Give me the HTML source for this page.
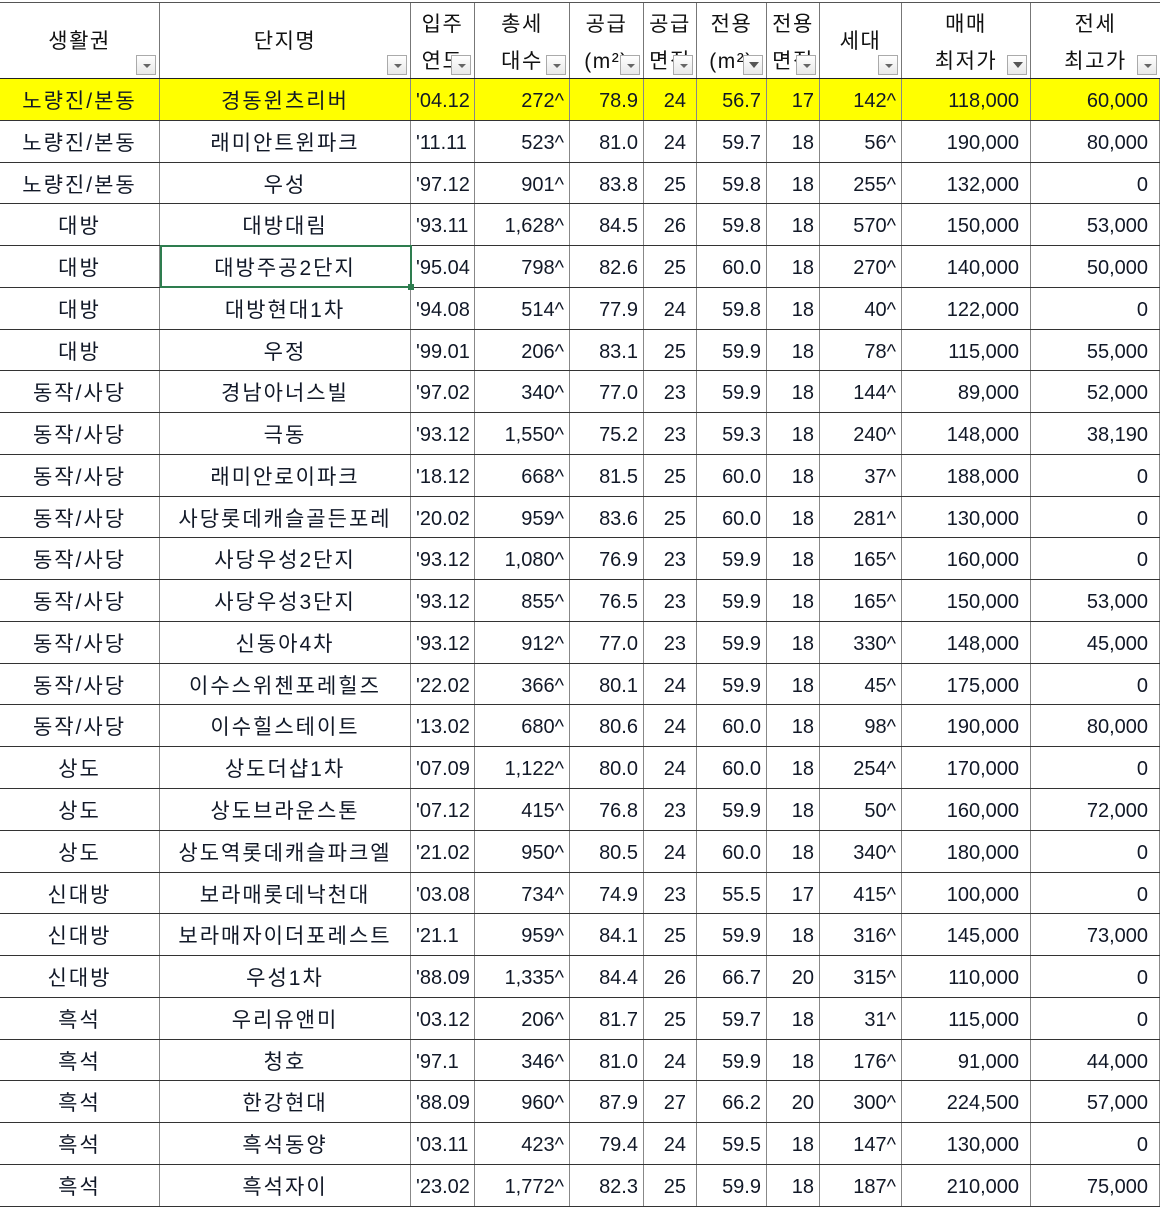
<!DOCTYPE html>
<html><head><meta charset="utf-8"><style>
*{margin:0;padding:0;box-sizing:border-box}
body{width:1160px;height:1207px;background:#fff;overflow:hidden;position:relative;font-family:"Liberation Sans","Noto Sans CJK KR",sans-serif;color:#111;}
.hdr{position:absolute;top:2px;left:0;height:77px;width:1160px;display:flex;border-top:1px solid #555;border-bottom:1px solid #222;}
.hdr>div{position:relative;border-right:1px solid #777;height:100%;font-size:21px;text-align:center;overflow:hidden;letter-spacing:1.5px}
.one{line-height:78px}
.two{line-height:37px;padding-top:3px}
.btn{position:absolute;right:3px;bottom:3px;width:20px;height:20px;border:1px solid #aaa;background:linear-gradient(#fff,#e8e8e8)}
.btn:after{content:"";position:absolute;left:6px;top:8px;border-left:4px solid transparent;border-right:4px solid transparent;border-top:4px solid #666}
.btn.f:after{left:5px;top:6px;border-left:5px solid transparent;border-right:5px solid transparent;border-top:6px solid #555}
.rows{position:absolute;top:79px;left:0;width:1160px}
.r{display:flex;height:41.78px;border-bottom:1px solid #333}
.r>div{border-right:1px solid #888;font-size:20px;line-height:41px;padding-top:2px;white-space:nowrap;overflow:hidden;color:#111827}
.r>div:nth-child(1),.r>div:nth-child(2){text-align:center;letter-spacing:2px;font-size:21px}
.r>div:nth-child(3){text-align:left;padding-left:5px}
.r>div:nth-child(n+4){text-align:right;padding-right:5px}
.r>div:nth-child(6){padding-right:10px}
.r>div:nth-child(10),.r>div:nth-child(11){padding-right:11px}
.y{background:#ffff00}
.c1{width:160px}.c2{width:251px}.c3{width:64px}.c4{width:95px}.c5{width:74px}.c6{width:53px}.c7{width:70px}.c8{width:53px}.c9{width:82px}.c10{width:129px}.c11{width:129px}
.sel{position:absolute;left:160px;top:245px;width:252px;height:43px;border:2px solid #2e7d4f}
.sel:after{content:"";position:absolute;right:-4px;bottom:-4px;width:6px;height:6px;background:#2e7d4f}
</style></head><body>
<div class="hdr">
<div class="c1 one">생활권<span class="btn"></span></div>
<div class="c2 one">단지명<span class="btn"></span></div>
<div class="c3 two">입주<br>연도<span class="btn"></span></div>
<div class="c4 two">총세<br>대수<span class="btn"></span></div>
<div class="c5 two">공급<br>(m²)<span class="btn"></span></div>
<div class="c6 two">공급<br>면적<span class="btn"></span></div>
<div class="c7 two">전용<br>(m²)<span class="btn f"></span></div>
<div class="c8 two">전용<br>면적<span class="btn"></span></div>
<div class="c9 one">세대<span class="btn"></span></div>
<div class="c10 two">매매<br>최저가<span class="btn f"></span></div>
<div class="c11 two" style="border-right:none">전세<br>최고가<span class="btn"></span></div>
</div>
<div class="rows">
<div class="r y"><div class="c1">노량진/본동</div><div class="c2">경동윈츠리버</div><div class="c3">'04.12</div><div class="c4">272^</div><div class="c5">78.9</div><div class="c6">24</div><div class="c7">56.7</div><div class="c8">17</div><div class="c9">142^</div><div class="c10">118,000</div><div class="c11">60,000</div></div>
<div class="r"><div class="c1">노량진/본동</div><div class="c2">래미안트윈파크</div><div class="c3">'11.11</div><div class="c4">523^</div><div class="c5">81.0</div><div class="c6">24</div><div class="c7">59.7</div><div class="c8">18</div><div class="c9">56^</div><div class="c10">190,000</div><div class="c11">80,000</div></div>
<div class="r"><div class="c1">노량진/본동</div><div class="c2">우성</div><div class="c3">'97.12</div><div class="c4">901^</div><div class="c5">83.8</div><div class="c6">25</div><div class="c7">59.8</div><div class="c8">18</div><div class="c9">255^</div><div class="c10">132,000</div><div class="c11">0</div></div>
<div class="r"><div class="c1">대방</div><div class="c2">대방대림</div><div class="c3">'93.11</div><div class="c4">1,628^</div><div class="c5">84.5</div><div class="c6">26</div><div class="c7">59.8</div><div class="c8">18</div><div class="c9">570^</div><div class="c10">150,000</div><div class="c11">53,000</div></div>
<div class="r"><div class="c1">대방</div><div class="c2">대방주공2단지</div><div class="c3">'95.04</div><div class="c4">798^</div><div class="c5">82.6</div><div class="c6">25</div><div class="c7">60.0</div><div class="c8">18</div><div class="c9">270^</div><div class="c10">140,000</div><div class="c11">50,000</div></div>
<div class="r"><div class="c1">대방</div><div class="c2">대방현대1차</div><div class="c3">'94.08</div><div class="c4">514^</div><div class="c5">77.9</div><div class="c6">24</div><div class="c7">59.8</div><div class="c8">18</div><div class="c9">40^</div><div class="c10">122,000</div><div class="c11">0</div></div>
<div class="r"><div class="c1">대방</div><div class="c2">우정</div><div class="c3">'99.01</div><div class="c4">206^</div><div class="c5">83.1</div><div class="c6">25</div><div class="c7">59.9</div><div class="c8">18</div><div class="c9">78^</div><div class="c10">115,000</div><div class="c11">55,000</div></div>
<div class="r"><div class="c1">동작/사당</div><div class="c2">경남아너스빌</div><div class="c3">'97.02</div><div class="c4">340^</div><div class="c5">77.0</div><div class="c6">23</div><div class="c7">59.9</div><div class="c8">18</div><div class="c9">144^</div><div class="c10">89,000</div><div class="c11">52,000</div></div>
<div class="r"><div class="c1">동작/사당</div><div class="c2">극동</div><div class="c3">'93.12</div><div class="c4">1,550^</div><div class="c5">75.2</div><div class="c6">23</div><div class="c7">59.3</div><div class="c8">18</div><div class="c9">240^</div><div class="c10">148,000</div><div class="c11">38,190</div></div>
<div class="r"><div class="c1">동작/사당</div><div class="c2">래미안로이파크</div><div class="c3">'18.12</div><div class="c4">668^</div><div class="c5">81.5</div><div class="c6">25</div><div class="c7">60.0</div><div class="c8">18</div><div class="c9">37^</div><div class="c10">188,000</div><div class="c11">0</div></div>
<div class="r"><div class="c1">동작/사당</div><div class="c2">사당롯데캐슬골든포레</div><div class="c3">'20.02</div><div class="c4">959^</div><div class="c5">83.6</div><div class="c6">25</div><div class="c7">60.0</div><div class="c8">18</div><div class="c9">281^</div><div class="c10">130,000</div><div class="c11">0</div></div>
<div class="r"><div class="c1">동작/사당</div><div class="c2">사당우성2단지</div><div class="c3">'93.12</div><div class="c4">1,080^</div><div class="c5">76.9</div><div class="c6">23</div><div class="c7">59.9</div><div class="c8">18</div><div class="c9">165^</div><div class="c10">160,000</div><div class="c11">0</div></div>
<div class="r"><div class="c1">동작/사당</div><div class="c2">사당우성3단지</div><div class="c3">'93.12</div><div class="c4">855^</div><div class="c5">76.5</div><div class="c6">23</div><div class="c7">59.9</div><div class="c8">18</div><div class="c9">165^</div><div class="c10">150,000</div><div class="c11">53,000</div></div>
<div class="r"><div class="c1">동작/사당</div><div class="c2">신동아4차</div><div class="c3">'93.12</div><div class="c4">912^</div><div class="c5">77.0</div><div class="c6">23</div><div class="c7">59.9</div><div class="c8">18</div><div class="c9">330^</div><div class="c10">148,000</div><div class="c11">45,000</div></div>
<div class="r"><div class="c1">동작/사당</div><div class="c2">이수스위첸포레힐즈</div><div class="c3">'22.02</div><div class="c4">366^</div><div class="c5">80.1</div><div class="c6">24</div><div class="c7">59.9</div><div class="c8">18</div><div class="c9">45^</div><div class="c10">175,000</div><div class="c11">0</div></div>
<div class="r"><div class="c1">동작/사당</div><div class="c2">이수힐스테이트</div><div class="c3">'13.02</div><div class="c4">680^</div><div class="c5">80.6</div><div class="c6">24</div><div class="c7">60.0</div><div class="c8">18</div><div class="c9">98^</div><div class="c10">190,000</div><div class="c11">80,000</div></div>
<div class="r"><div class="c1">상도</div><div class="c2">상도더샵1차</div><div class="c3">'07.09</div><div class="c4">1,122^</div><div class="c5">80.0</div><div class="c6">24</div><div class="c7">60.0</div><div class="c8">18</div><div class="c9">254^</div><div class="c10">170,000</div><div class="c11">0</div></div>
<div class="r"><div class="c1">상도</div><div class="c2">상도브라운스톤</div><div class="c3">'07.12</div><div class="c4">415^</div><div class="c5">76.8</div><div class="c6">23</div><div class="c7">59.9</div><div class="c8">18</div><div class="c9">50^</div><div class="c10">160,000</div><div class="c11">72,000</div></div>
<div class="r"><div class="c1">상도</div><div class="c2">상도역롯데캐슬파크엘</div><div class="c3">'21.02</div><div class="c4">950^</div><div class="c5">80.5</div><div class="c6">24</div><div class="c7">60.0</div><div class="c8">18</div><div class="c9">340^</div><div class="c10">180,000</div><div class="c11">0</div></div>
<div class="r"><div class="c1">신대방</div><div class="c2">보라매롯데낙천대</div><div class="c3">'03.08</div><div class="c4">734^</div><div class="c5">74.9</div><div class="c6">23</div><div class="c7">55.5</div><div class="c8">17</div><div class="c9">415^</div><div class="c10">100,000</div><div class="c11">0</div></div>
<div class="r"><div class="c1">신대방</div><div class="c2">보라매자이더포레스트</div><div class="c3">'21.1</div><div class="c4">959^</div><div class="c5">84.1</div><div class="c6">25</div><div class="c7">59.9</div><div class="c8">18</div><div class="c9">316^</div><div class="c10">145,000</div><div class="c11">73,000</div></div>
<div class="r"><div class="c1">신대방</div><div class="c2">우성1차</div><div class="c3">'88.09</div><div class="c4">1,335^</div><div class="c5">84.4</div><div class="c6">26</div><div class="c7">66.7</div><div class="c8">20</div><div class="c9">315^</div><div class="c10">110,000</div><div class="c11">0</div></div>
<div class="r"><div class="c1">흑석</div><div class="c2">우리유앤미</div><div class="c3">'03.12</div><div class="c4">206^</div><div class="c5">81.7</div><div class="c6">25</div><div class="c7">59.7</div><div class="c8">18</div><div class="c9">31^</div><div class="c10">115,000</div><div class="c11">0</div></div>
<div class="r"><div class="c1">흑석</div><div class="c2">청호</div><div class="c3">'97.1</div><div class="c4">346^</div><div class="c5">81.0</div><div class="c6">24</div><div class="c7">59.9</div><div class="c8">18</div><div class="c9">176^</div><div class="c10">91,000</div><div class="c11">44,000</div></div>
<div class="r"><div class="c1">흑석</div><div class="c2">한강현대</div><div class="c3">'88.09</div><div class="c4">960^</div><div class="c5">87.9</div><div class="c6">27</div><div class="c7">66.2</div><div class="c8">20</div><div class="c9">300^</div><div class="c10">224,500</div><div class="c11">57,000</div></div>
<div class="r"><div class="c1">흑석</div><div class="c2">흑석동양</div><div class="c3">'03.11</div><div class="c4">423^</div><div class="c5">79.4</div><div class="c6">24</div><div class="c7">59.5</div><div class="c8">18</div><div class="c9">147^</div><div class="c10">130,000</div><div class="c11">0</div></div>
<div class="r"><div class="c1">흑석</div><div class="c2">흑석자이</div><div class="c3">'23.02</div><div class="c4">1,772^</div><div class="c5">82.3</div><div class="c6">25</div><div class="c7">59.9</div><div class="c8">18</div><div class="c9">187^</div><div class="c10">210,000</div><div class="c11">75,000</div></div>
</div>
<div class="sel"></div>
</body></html>
